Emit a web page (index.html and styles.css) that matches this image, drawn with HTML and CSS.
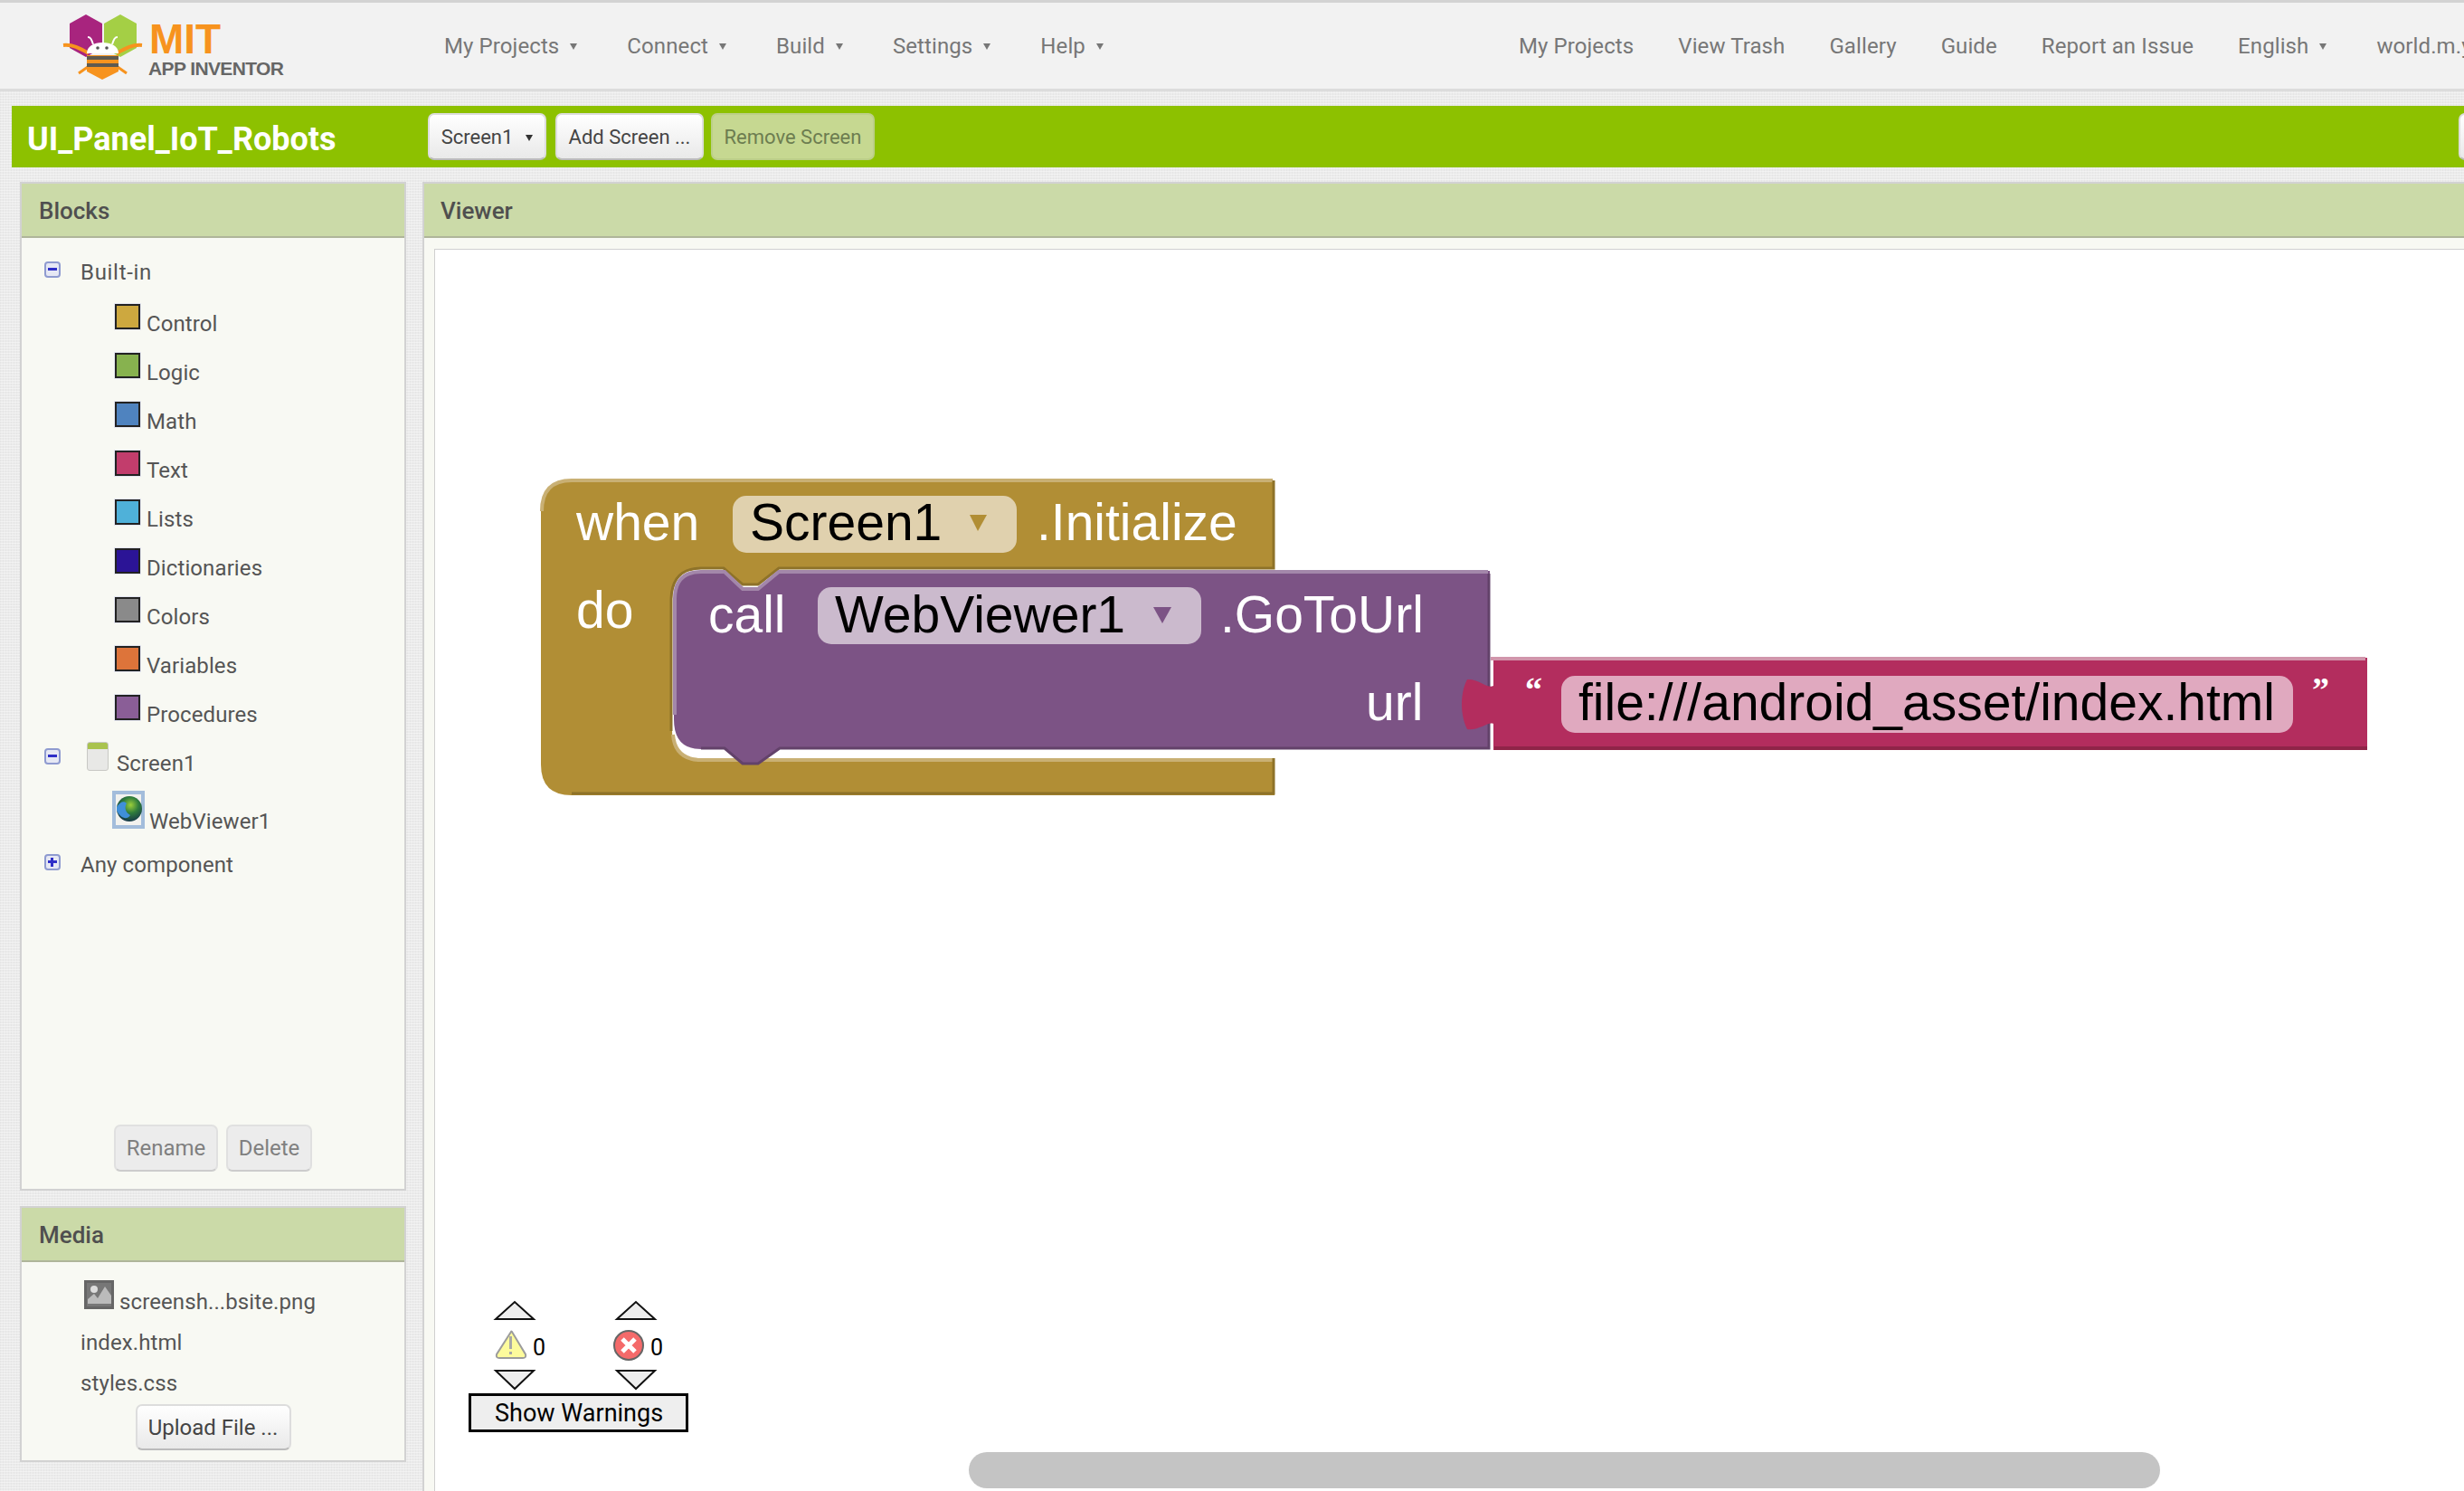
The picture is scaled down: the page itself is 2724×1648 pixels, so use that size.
FILE: index.html
```html
<!DOCTYPE html>
<html lang="en">
<head>
  <meta charset="UTF-8" />
  <title>MIT App Inventor</title>
  <link rel="stylesheet" href="styles.css">
</head>
<body>
  <header class="topbar">
    <svg class="logo" width="250" height="80" viewBox="68 5 250 80">
      <polygon class="hex-purple" points="77,19 95,9 113,19 113,46 95,56 77,46" />
      <polygon class="hex-green" points="115,19 133,9 151,19 151,46 133,56 115,46" />
      <path class="bee-arm" d="M70,43 C80,42 88,46 98,52 M157,43 C147,42 139,46 129,52" />
      <path class="bee-leg" d="M87,74 L97,67 M140,74 L130,67" />
      <path class="bee-line" d="M103,42 C101,36 100,34 97,34 M124,42 C126,36 127,34 130,34" />
      <path class="bee-orange" d="M96,54 H131 V72 L113,81 L96,72 Z" />
      <rect class="bee-stripe" x="96" y="55" width="35" height="4" />
      <rect class="bee-stripe" x="96" y="63" width="35" height="4" />
      <path class="bee-head" d="M96,52 C96,44 104,40 113,40 C123,40 131,44 131,52 Z" />
      <circle class="bee-eye" cx="108" cy="46" r="1.8" />
      <circle class="bee-eye" cx="118" cy="46" r="1.8" />
      <text class="logo-mit" x="165" y="52">MIT</text>
      <text class="logo-sub" x="164" y="76" textLength="150">APP INVENTOR</text>
    </svg>
    <nav class="nav">
      <span class="nav-item">My Projects<i class="caret"></i></span>
      <span class="nav-item">Connect<i class="caret"></i></span>
      <span class="nav-item">Build<i class="caret"></i></span>
      <span class="nav-item">Settings<i class="caret"></i></span>
      <span class="nav-item">Help<i class="caret"></i></span>
    </nav>
    <nav class="nav nav-right">
      <span class="nav-item">My Projects</span>
      <span class="nav-item">View Trash</span>
      <span class="nav-item">Gallery</span>
      <span class="nav-item">Guide</span>
      <span class="nav-item">Report an Issue</span>
      <span class="nav-item">English<i class="caret"></i></span>
      <span class="nav-item">world.m.y</span>
    </nav>
  </header>

  <div class="project-bar">
    <h1 class="project-name">UI_Panel_IoT_Robots</h1>
    <button class="btn btn-screen">Screen1<i class="caret caret-dark"></i></button>
    <button class="btn btn-add">Add Screen ...</button>
    <button class="btn btn-remove">Remove Screen</button>
    <button class="btn btn-edge"></button>
  </div>

  <main class="main">
    <div class="side">
      <section class="panel panel-blocks">
        <h2 class="panel-head">Blocks</h2>
        <div class="tree">
          <div class="row row-builtin"><i class="toggle minus"></i><span>Built-in</span></div>
          <div class="row row-cat"><i class="swatch control"></i><span>Control</span></div>
          <div class="row row-cat"><i class="swatch logic"></i><span>Logic</span></div>
          <div class="row row-cat"><i class="swatch math"></i><span>Math</span></div>
          <div class="row row-cat"><i class="swatch text"></i><span>Text</span></div>
          <div class="row row-cat"><i class="swatch lists"></i><span>Lists</span></div>
          <div class="row row-cat"><i class="swatch dicts"></i><span>Dictionaries</span></div>
          <div class="row row-cat"><i class="swatch colors"></i><span>Colors</span></div>
          <div class="row row-cat"><i class="swatch variables"></i><span>Variables</span></div>
          <div class="row row-cat row-last"><i class="swatch procedures"></i><span>Procedures</span></div>
          <div class="row row-screen"><i class="toggle minus toggle-low"></i><i class="screen-icon"></i><span>Screen1</span></div>
          <div class="row row-web">
            <svg class="web-icon" width="36" height="42" viewBox="0 0 36 42">
              <defs>
                <radialGradient id="globe" cx="0.55" cy="0.35" r="0.7">
                  <stop offset="0" stop-color="#9ccf3a" />
                  <stop offset="0.45" stop-color="#2f7d3c" />
                  <stop offset="1" stop-color="#12304a" />
                </radialGradient>
              </defs>
              <rect width="36" height="42" fill="#a3bddb" />
              <rect x="4" y="4" width="28" height="34" fill="#f2f2ee" />
              <circle cx="19" cy="20" r="14" fill="url(#globe)" />
              <path d="M5,18 C9,12 13,11 16,14 C13,19 15,24 20,27 C16,33 9,30 5,22 Z" fill="#3f8fd8" />
            </svg>
            <span>WebViewer1</span>
          </div>
          <div class="row row-any"><i class="toggle plus"></i><span>Any component</span></div>
        </div>
        <div class="panel-actions">
          <button class="btn btn-off btn-rename">Rename</button>
          <button class="btn btn-off btn-delete">Delete</button>
        </div>
      </section>

      <section class="panel panel-media">
        <h2 class="panel-head">Media</h2>
        <div class="media-list">
          <div class="row media-image">
            <svg width="33" height="32" viewBox="0 0 33 32">
              <rect width="33" height="32" fill="#666" />
              <rect x="3" y="3" width="27" height="26" fill="#777" />
              <circle cx="11" cy="10" r="4" fill="#ddd" />
              <path d="M4,26 L4,21 L11,15 L15,20 L23,7 L30,17 L30,26 Z" fill="#bbb" />
            </svg>
            <span>screensh...bsite.png</span>
          </div>
          <div class="row media-file media-index"><span>index.html</span></div>
          <div class="row media-file media-styles"><span>styles.css</span></div>
        </div>
        <div class="panel-actions">
          <button class="btn btn-upload">Upload File ...</button>
        </div>
      </section>
    </div>

    <section class="panel panel-viewer">
      <h2 class="panel-head">Viewer</h2>
      <div class="viewer-body">
        <div class="workspace">
          <!-- viewBox uses page coordinates -->
          <svg class="canvas" width="2244" height="1373" viewBox="480 275 2244 1373">
            <!-- when block -->
            <path class="gold" d="M598,565 Q598,531 632,531 H1409 V629 H861 L838,647 H821 L800,629 H775 Q743,629 743,662 V808 Q743,838 772,838 H1409 V879 H632 Q598,879 598,845 Z" />
            <path class="gold-light" d="M599,565 Q599,531 632,531 H1407 M744,812 Q746,838 772,840 H1407" />
            <path class="gold-dark" d="M1408,531 V628 H861 L838,646 H821 L800,628 H775 Q743,628 742,662 V808 M1408,838 V877 H632" />
            <rect class="gold-field" x="810" y="548" width="314" height="63" rx="15" />
            <polygon class="gold-arrow" points="1072,569 1091,569 1081,587" />
            <text class="label" x="637" y="597">when</text>
            <text class="label label-dark" x="829" y="597">Screen1</text>
            <text class="label" x="1146" y="597">.Initialize</text>
            <text class="label" x="637" y="694">do</text>

            <!-- call block -->
            <path class="purple" d="M745,662 Q745,631 775,631 H801 L821,650 H838 L861,631 H1647 V828 H862 L838,845 H821 L801,828 H775 Q745,828 745,795 Z" />
            <path class="purple-light" d="M746,790 V662 Q746,632 775,632 H801 L821,651 H838 L861,632 H1645" />
            <path class="purple-dark" d="M1646,634 V827 H862 L838,844 H821 L801,827 H775" />
            <rect class="purple-field" x="904" y="649" width="424" height="63" rx="15" />
            <polygon class="purple-arrow" points="1275,671 1295,671 1285,689" />
            <text class="label" x="783" y="699">call</text>
            <text class="label label-dark" x="923" y="699">WebViewer1</text>
            <text class="label" x="1349" y="699">.GoToUrl</text>
            <text class="label" x="1510" y="796">url</text>

            <!-- text block -->
            <path class="red" d="M1651,727 H2617 V829 H1651 V800 C1645,797 1635,808 1622,806 C1614,790 1614,766 1622,751 C1635,750 1645,762 1651,758 Z" />
            <path class="red-light" d="M1648,728 H2615" />
            <path class="red-dark" d="M1652,827 H2617" />
            <rect class="red-field" x="1726" y="747" width="809" height="63" rx="15" />
            <text class="quote" x="1686" y="775">“</text>
            <text class="label label-dark" x="1745" y="796">file:///android_asset/index.html</text>
            <text class="quote" x="2556" y="775">”</text>

            <!-- warning indicator -->
            <polygon class="arrow" points="548,1458 569,1439 590,1458" />
            <polygon class="arrow" points="682,1458 703,1439 724,1458" />
            <polygon class="arrow" points="548,1515 590,1515 569,1535" />
            <polygon class="arrow" points="682,1515 724,1515 703,1535" />
            <path class="warn" d="M565,1472 Q565,1471 566,1472 L581,1497 Q582,1501 578,1501 H552 Q548,1501 549,1497 Z" />
            <rect class="warn-mark" x="563" y="1477" width="3" height="14" />
            <rect class="warn-mark" x="563" y="1494" width="3" height="3" />
            <circle class="err" cx="695" cy="1487" r="16" />
            <path class="err-x" d="M688,1480 L702,1494 M702,1480 L688,1494" />
            <text class="count" x="589" y="1498">0</text>
            <text class="count" x="719" y="1498">0</text>
            <rect class="warn-btn" x="519.5" y="1541.5" width="240" height="40" />
            <text class="warn-label" x="547" y="1571">Show Warnings</text>

            <!-- scrollbar -->
            <rect class="scroll" x="1071" y="1605" width="1317" height="40" rx="20" />
          </svg>
        </div>
      </div>
    </section>
  </main>
</body>
</html>
```

FILE: styles.css
```css
* {
  box-sizing: border-box;
}
html, body {
  margin: 0;
  height: 100%;
}
body {
  width: 2724px;
  height: 1648px;
  overflow: hidden;
  font-family: Roboto, "Liberation Sans", sans-serif;
  font-size: 24px;
  color: #555;
  background-color: #ebebeb;
  background-image:
    repeating-linear-gradient(0deg, rgba(255, 255, 255, 0.4) 0 1px, transparent 1px 3px),
    repeating-linear-gradient(90deg, rgba(0, 0, 0, 0.025) 0 1px, transparent 1px 3px);
}
button {
  font-family: inherit;
  padding: 0;
}

/* top bar */
.topbar {
  display: flex;
  align-items: center;
  height: 101px;
  padding-left: 68px;
  background: #f2f2f2;
  border-top: 3px solid #d3d3d3;
  border-bottom: 3px solid #dcdcdc;
  overflow: hidden;
  white-space: nowrap;
}
.logo {
  flex: none;
  margin-right: 173px;
  margin-top: 3px;
}
.logo text {
  font-family: "Liberation Sans", sans-serif;
  font-weight: bold;
}
.logo-mit {
  font-size: 46px;
  fill: #f7931e;
}
.logo-sub {
  font-size: 21px;
  fill: #666;
}
.hex-purple { fill: #a8247e; }
.hex-green { fill: #a4cf45; }
.bee-orange { fill: #f7931e; }
.bee-arm { fill: none; stroke: #f7931e; stroke-width: 4; }
.bee-leg { fill: none; stroke: #f7931e; stroke-width: 3; }
.bee-stripe { fill: #5f5a50; }
.bee-head { fill: #fff; }
.bee-eye { fill: #555; }
.bee-line { stroke: #fff; stroke-width: 2; fill: none; }

.nav {
  display: flex;
  flex: none;
  gap: 49px;
  color: #777;
  letter-spacing: 0.1px;
}
.nav-right {
  margin-left: 453px;
}
.nav-item {
  display: flex;
  align-items: center;
}
.caret {
  display: inline-block;
  width: 0;
  height: 0;
  margin: 2px 6px 0 12px;
  border-left: 4px solid transparent;
  border-right: 4px solid transparent;
  border-top: 7px solid #777;
}
.caret-dark {
  vertical-align: 3px;
  border-top-color: #333;
  margin: 0 0 0 14px;
}

/* project bar */
.project-bar {
  display: flex;
  align-items: flex-start;
  height: 68px;
  margin: 16px 0 0 13px;
  padding-top: 8px;
  background: #8dc100;
}
.project-name {
  flex: none;
  width: 460px;
  margin: 0;
  padding: 8px 0 0 17px;
  font-size: 36px;
  line-height: 42px;
  font-weight: bold;
  color: #fff;
}
.btn {
  flex: none;
  height: 52px;
  font-size: 22px;
  color: #444;
  background: linear-gradient(#fff, #e9e9e9);
  border: 2px solid #ddd;
  border-bottom-color: #bbb;
  border-radius: 7px;
}
.btn-screen {
  width: 131px;
  margin-right: 10px;
}
.btn-add {
  width: 164px;
  margin-right: 8px;
}
.btn-remove {
  width: 181px;
  margin-right: 1751px;
  color: #6d7d50;
  background: #c6d891;
  border-color: #bccf88;
}
.btn-edge {
  width: 40px;
}
.btn-off {
  font-size: 24px;
  color: #808080;
  background: #ececec;
  border-color: #e0e0e0;
  border-bottom-color: #ccc;
}
.btn-rename { width: 115px; }
.btn-delete { width: 95px; }
.btn-upload {
  width: 172px;
  height: 51px;
  font-size: 24px;
}

/* panels */
.main {
  display: flex;
  gap: 18px;
  margin-top: 16px;
  padding-left: 22px;
}
.side {
  display: flex;
  flex: none;
  flex-direction: column;
  gap: 17px;
  width: 427px;
}
.panel {
  display: flex;
  flex-direction: column;
  background: #f8f9f3;
  border: 2px solid #d2d2d2;
}
.panel-head {
  flex: none;
  height: 60px;
  margin: 0;
  padding: 15px 0 0 19px;
  font-size: 26px;
  line-height: 30px;
  font-weight: 500;
  color: #4f4f4f;
  background: #cbdaa8;
  border-bottom: 2px solid #afb59a;
}
.panel-blocks {
  height: 1115px;
}
.panel-media {
  height: 283px;
}
.panel-viewer {
  flex: none;
  width: 2300px;
  height: 1480px;
  border-right: 0;
  border-bottom: 0;
}
.panel-viewer .panel-head {
  padding-left: 18px;
}

/* tree */
.tree {
  flex: 1;
  padding-top: 23px;
}
.row {
  display: flex;
  align-items: baseline;
  height: 54px;
  padding-left: 25px;
  line-height: 30px;
  letter-spacing: 0.1px;
}
.row-builtin {
  height: 50px;
  letter-spacing: 0.7px;
}
.row-cat {
  align-items: flex-start;
  gap: 7px;
  padding-left: 103px;
}
.row-cat span {
  margin-top: 7px;
}
.row-last { height: 52px; }
.row-web {
  gap: 5px;
  height: 67px;
  padding-left: 100px;
}
.toggle {
  position: relative;
  flex: none;
  align-self: flex-start;
  width: 18px;
  height: 18px;
  margin: 3px 22px 0 0;
  background: #e6e8f4;
  border: 2px solid #8f9bd0;
  border-radius: 4px;
}
.toggle-low {
  margin: 7px 29px 0 0;
}
.toggle::before {
  content: "";
  position: absolute;
  left: 2px;
  right: 2px;
  top: 5px;
  height: 3px;
  background: #2f2fc8;
}
.plus::after {
  content: "";
  position: absolute;
  left: 5px;
  top: 2px;
  width: 3px;
  height: 10px;
  background: #2f2fc8;
}
.swatch {
  flex: none;
  width: 28px;
  height: 28px;
  border: 2px solid #222;
  box-shadow: 0 0 0 1px #e4e6f0;
}
.control { background: #cda83f; }
.logic { background: #87b24f; }
.math { background: #4f83bf; }
.text { background: #c23d6c; }
.lists { background: #4fb1d9; }
.dicts { background: #2b1496; }
.colors { background: #8a8a8a; }
.variables { background: #dd743a; }
.procedures { background: #8a5e97; }
.screen-icon {
  flex: none;
  width: 24px;
  height: 32px;
  margin-right: 9px;
  background: linear-gradient(#a9c34e 0 7px, #e8e8e6 7px);
  border: 1px solid #c8c8c4;
  border-radius: 3px;
}
.web-icon {
  flex: none;
}

/* media */
.media-list {
  padding-top: 20px;
}
.media-image {
  gap: 6px;
  padding-left: 69px;
}
.media-file {
  padding-left: 65px;
}
.media-index { height: 45px; }
.media-styles { height: 38px; }

.panel-actions {
  display: flex;
  flex: none;
  justify-content: center;
  gap: 9px;
  padding-bottom: 19px;
}
.panel-media .panel-actions {
  padding-bottom: 0;
}

/* viewer */
.viewer-body {
  flex: 1;
  padding: 12px 0 0 11px;
}
.workspace {
  height: 100%;
  background: #fff;
  border-left: 1px solid #d0d0d0;
  border-top: 1px solid #d0d0d0;
}
.canvas {
  display: block;
  margin: -1px 0 0 -1px;
}
.canvas text {
  font-family: "Liberation Sans", sans-serif;
}
.canvas .label {
  font-size: 57px;
  fill: #fff;
}
.canvas .label-dark {
  fill: #000;
}
.canvas .quote {
  font-family: "Liberation Serif", serif;
  font-size: 38px;
  font-weight: bold;
  fill: #fff;
}
.gold { fill: #b18e35; }
.gold-light { fill: none; stroke: #c9b074; stroke-width: 4; }
.gold-dark { fill: none; stroke: #8e7229; stroke-width: 3; }
.gold-field { fill: #e0d1ae; }
.gold-arrow { fill: #b18e35; }
.purple { fill: #7c5385; }
.purple-light { fill: none; stroke: #a387aa; stroke-width: 4; }
.purple-dark { fill: none; stroke: #63426a; stroke-width: 3; }
.purple-field { fill: #cbbacd; }
.purple-arrow { fill: #7c5385; }
.red { fill: #b32d5e; }
.red-light { fill: none; stroke: #d195ab; stroke-width: 4; }
.red-dark { fill: none; stroke: #8f2448; stroke-width: 4; }
.red-field { fill: #e0a9bf; }
.arrow {
  fill: #eee;
  stroke: #111;
  stroke-width: 2;
}
.warn {
  fill: #fdfb9c;
  stroke: #9c9c9c;
  stroke-width: 2;
}
.warn-mark { fill: #a8a8a8; }
.err {
  fill: #f46a6a;
  stroke: #666;
  stroke-width: 2;
}
.err-x {
  fill: none;
  stroke: #fff;
  stroke-width: 5;
}
.canvas .count {
  font-family: Roboto, sans-serif;
  font-size: 25px;
  fill: #000;
}
.warn-btn {
  fill: #eee;
  stroke: #000;
  stroke-width: 3;
}
.canvas .warn-label {
  font-family: Roboto, sans-serif;
  font-size: 27px;
  fill: #000;
}
.scroll { fill: #c4c4c4; }
```
